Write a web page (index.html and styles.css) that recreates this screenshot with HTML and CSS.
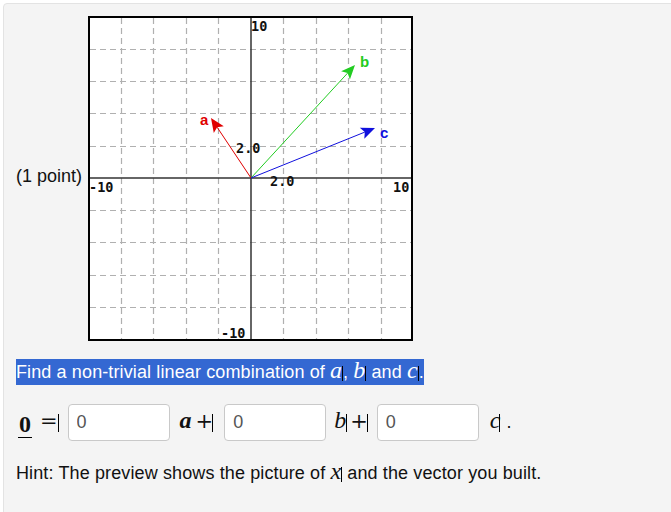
FILE: index.html
```html
<!DOCTYPE html>
<html>
<head>
<meta charset="utf-8">
<link rel="stylesheet" href="styles.css">
</head>
<body>
<div class="panel">
  <div class="graph-row">
    <span class="points">(1 point)</span>
    <svg class="graph" width="325" height="325" viewBox="0 0 325 325">
      <rect x="0" y="0" width="325" height="325" fill="#fff"/>
      <g stroke="#b0b0b0" stroke-width="1.2" stroke-dasharray="6 4">
        <line x1="33.5" y1="2" x2="33.5" y2="323"/>
        <line x1="65.5" y1="2" x2="65.5" y2="323"/>
        <line x1="98.5" y1="2" x2="98.5" y2="323"/>
        <line x1="130.5" y1="2" x2="130.5" y2="323"/>
        <line x1="195.5" y1="2" x2="195.5" y2="323"/>
        <line x1="228.5" y1="2" x2="228.5" y2="323"/>
        <line x1="260.5" y1="2" x2="260.5" y2="323"/>
        <line x1="293.5" y1="2" x2="293.5" y2="323"/>
        <line x1="2" y1="33.5" x2="323" y2="33.5"/>
        <line x1="2" y1="65.5" x2="323" y2="65.5"/>
        <line x1="2" y1="97.5" x2="323" y2="97.5"/>
        <line x1="2" y1="130.5" x2="323" y2="130.5"/>
        <line x1="2" y1="194.5" x2="323" y2="194.5"/>
        <line x1="2" y1="226.5" x2="323" y2="226.5"/>
        <line x1="2" y1="259.5" x2="323" y2="259.5"/>
        <line x1="2" y1="291.5" x2="323" y2="291.5"/>
      </g>
      <g stroke="#333" stroke-width="1.5">
        <line x1="163" y1="1" x2="163" y2="324"/>
        <line x1="1" y1="162" x2="324" y2="162"/>
      </g>
      <g class="ticks">
        <text x="163" y="15">10</text>
        <text x="148" y="137">2.0</text>
        <text x="182" y="170">2.0</text>
        <text x="1" y="176">-10</text>
        <text x="305" y="176">10</text>
        <text x="133" y="322">-10</text>
      </g>
      <line x1="163" y1="162" x2="129.1" y2="111.2" stroke="#e00000" stroke-width="1"/>
      <polygon points="123,102 135.8,110.3 129.1,111.2 125.8,117" fill="#e00000"/>
      <line x1="163" y1="162" x2="259.6" y2="57.1" stroke="#22cc22" stroke-width="1"/>
      <polygon points="267,49 261.9,63.4 259.6,57.1 253.1,55.2" fill="#22cc22"/>
      <line x1="163" y1="162" x2="276.8" y2="116.1" stroke="#1010dd" stroke-width="1"/>
      <polygon points="287,112 276.3,122.8 276.8,116.1 271.8,111.7" fill="#1010dd"/>
      <text class="vl" x="112" y="109" fill="#e00000">a</text>
      <text class="vl" x="272" y="51" fill="#22cc22">b</text>
      <text class="vl" x="292" y="122" fill="#1010dd">c</text>
      <rect x="1" y="1" width="323" height="323" fill="none" stroke="#000" stroke-width="2"/>
    </svg>
  </div>
  <p class="prompt"><span class="sel">Find a non-trivial linear combination of <span class="mv">a</span><span class="bar"></span>, <span class="mv">b</span><span class="bar"></span> and <span class="mv">c</span><span class="bar"></span>.</span></p>
  <div class="eq"><span class="zero">0</span><span class="op eqs">=</span><span class="bar"></span><input class="ans i1" type="text" value="0"><span class="mv bold va">a</span><span class="op plus">+</span><span class="bar bn"></span><input class="ans i2" type="text" value="0"><span class="mv vb">b</span><span class="bar"></span><span class="op plus2">+</span><span class="bar bn"></span><input class="ans i3" type="text" value="0"><span class="mv vc">c</span><span class="bar bc"></span><span class="dot">.</span></div>
  <p class="hint">Hint: The preview shows the picture of <span class="mv">x</span><span class="bar"></span> and the vector you built.</p>
</div>
</body>
</html>
```

FILE: styles.css
```css
html, body {
  margin: 0;
  padding: 0;
  background: #fff;
  overflow: hidden;
}

body {
  font-family: "Liberation Sans", Arial, sans-serif;
  font-size: 18px;
  color: #111;
}

.panel {
  margin: 3px 0 0 3px;
  width: 720px;
  min-height: 620px;
  box-sizing: border-box;
  background: #f4f4f4;
  border: 1px solid #e3e3e3;
  border-radius: 4px;
  padding: 12px 0 0 12px;
}

.graph-row {
  display: flex;
  align-items: center;
}

.points {
  line-height: 21px;
  margin-top: -4px;
}

.graph {
  display: block;
  margin-left: 6px;
}

.ticks text {
  font-family: "DejaVu Sans Mono", monospace;
  font-weight: bold;
  font-size: 13.5px;
  fill: #111;
}

.vl {
  font-family: "Liberation Sans", Arial, sans-serif;
  font-weight: bold;
  font-size: 15px;
}

.prompt {
  margin: 18px 0 0 0;
  line-height: 26px;
  letter-spacing: 0.12px;
}

.sel {
  display: inline-block;
  background: #3468d2;
  color: #fff;
  line-height: 26px;
}

.mv {
  font-family: "Liberation Serif", "Times New Roman", serif;
  font-style: italic;
  font-size: 24px;
  line-height: 18px;
  letter-spacing: 0;
}

.bold {
  font-weight: bold;
}

.bar {
  display: inline-block;
  width: 1px;
  height: 15px;
  background: #000;
  vertical-align: -3px;
}

.eq {
  margin-top: 19px;
  line-height: 20px;
  white-space: nowrap;
}

.zero {
  display: inline-block;
  font-family: "Liberation Serif", "Times New Roman", serif;
  font-weight: bold;
  font-size: 24px;
  line-height: 1;
  margin-left: 2px;
  padding: 0 1px 1px;
  border-bottom: 1.5px solid #000;
  vertical-align: -4px;
}

.op {
  font-family: "DejaVu Serif", serif;
  font-size: 21px;
  line-height: 18px;
}

.eqs { margin-left: 8px; }
.eq .bar { height: 18px; vertical-align: -4px; }
.bn { margin-left: -1px; }
.bc { margin-left: -1px; }

.ans {
  box-sizing: border-box;
  width: 102px;
  height: 37px;
  border: 1px solid #c9c9c9;
  border-radius: 4px;
  background: #fff;
  padding: 0 8px;
  font-family: "Liberation Sans", Arial, sans-serif;
  font-size: 18px;
  color: #555;
  margin: 0;
  vertical-align: baseline;
}

.i1 { margin-left: 9px; }
.i2 { margin-left: 11px; }
.i3 { margin-left: 9px; }
.va { margin-left: 10px; }
.plus { margin-left: 4px; }
.vb { margin-left: 8px; }
.plus2 { margin-left: 3px; }
.vc { margin-left: 11px; }
.dot { margin-left: 6px; font-size: 18px; }

.hint {
  margin: 19px 0 0 0;
  line-height: 26px;
  letter-spacing: 0.12px;
}
```
